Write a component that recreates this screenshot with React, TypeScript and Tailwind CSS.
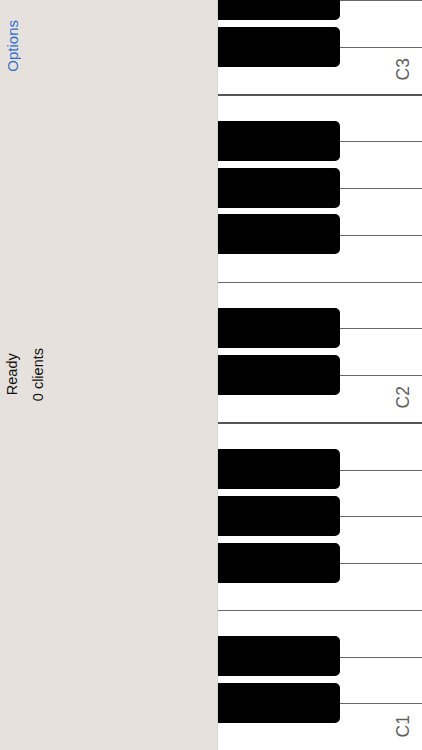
import React from 'react'

const KEY_H = 750 / 16

// top to bottom (pitch goes down)
const WHITE_KEYS = ['D3', 'C3', 'B2', 'A2', 'G2', 'F2', 'E2', 'D2', 'C2', 'B1', 'A1', 'G1', 'F1', 'E1', 'D1', 'C1']

// a black key sits on the top edge of every white key that is C, D, F, G or A
const BLACK_AT = WHITE_KEYS.map((k, i) => ('CDFGA'.includes(k[0]) ? i : -1)).filter(i => i >= 0)

const vertical = '[writing-mode:vertical-rl] rotate-180'

function SidePanel() {
  return (
    <div className="grid grid-rows-[1fr_auto_1fr] w-[218px] h-full shrink-0 bg-[#e6e1dc] border-r border-[#d8d3ce] text-[14.5px] leading-[16px] font-['Liberation_Sans',Arial,sans-serif]">
      <div className="self-start">
        <button className={`${vertical} h-fit mt-[20px] ml-[5px] text-[15px] text-[#2f6fce]`}>Options</button>
      </div>
      <div className={`${vertical} h-fit w-fit ml-[4px] flex flex-col gap-[10px] text-center text-[#111]`}>
        <div>Ready</div>
        <div>0 clients</div>
      </div>
      <div />
    </div>
  )
}

function Keyboard() {
  return (
    <div className="relative flex-1 h-full flex flex-col bg-white overflow-hidden">
      {WHITE_KEYS.map(k => (
        <div
          key={k}
          className={`flex-1 flex items-end justify-end pr-[10px] pb-[13px] border-t ${k[0] === 'B' ? 'border-t-2 border-[#555]' : 'border-[#666]'}`}
        >
          {k[0] === 'C' && (
            <span className={`${vertical} text-[17.5px] leading-none text-[#5f5f5f] font-['Liberation_Sans',Arial,sans-serif]`}>{k}</span>
          )}
        </div>
      ))}
      {BLACK_AT.map(i => (
        <div
          key={i}
          className="absolute left-0 w-[122px] h-[40px] bg-black rounded-r-[5px]"
          style={{ top: i * KEY_H - 20 }}
        />
      ))}
    </div>
  )
}

export default function App() {
  return (
    <div className="flex w-full h-[750px] overflow-hidden">
      <SidePanel />
      <Keyboard />
    </div>
  )
}
